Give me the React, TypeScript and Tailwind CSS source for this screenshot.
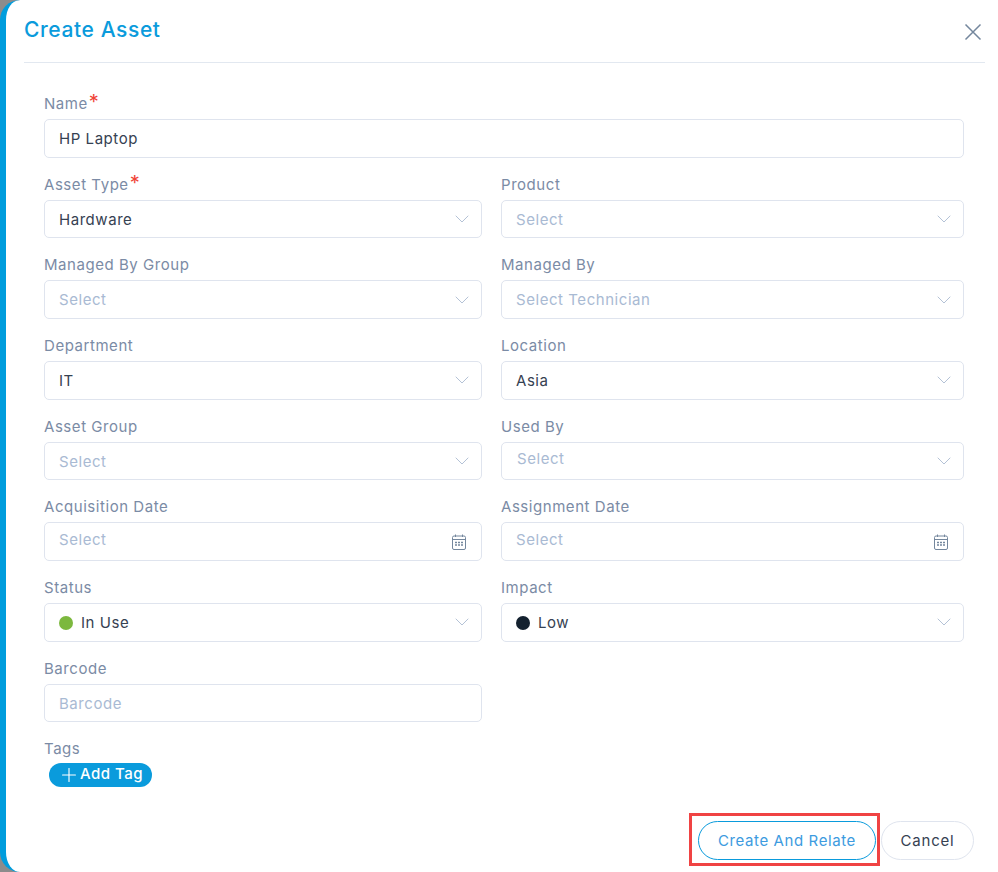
import { ChevronDown, Plus } from "lucide-react";

type FieldProps = {
    label: string;
    value?: string;
    placeholder?: string;
    required?: boolean;
    kind?: "select" | "date" | "input";
    dot?: string;
    textClass?: string;
};

function CalendarIcon() {
    return (
        <svg viewBox="0 0 14 16" className="w-[14px] h-[16px] text-[#74879d]" fill="none" stroke="currentColor" strokeWidth="1">
            <rect x="0.5" y="2" width="13" height="13.5" rx="1.5" />
            <path d="M0.5 5.5h13M3.5 0.5v2.5M10.5 0.5v2.5" />
            <path d="M3 8.5h2M6 8.5h2M9 8.5h2M3 11h2M6 11h2M9 11h2" strokeWidth="1.4" />
        </svg>
    );
}

function Field({ label, value, placeholder, required, kind = "select", dot, textClass }: FieldProps) {
    return (
        <div className="flex flex-col">
            <div className="h-[23px] text-[15px] leading-[23px] tracking-[0.55px] text-[#7b8ba5] whitespace-nowrap">
                {label}
                {required && <span className="ml-[1px] text-[#f04438] text-[20px] leading-[16px]">*</span>}
            </div>
            <div
                className={`h-[38.5px] mt-[4px] flex items-center justify-between pl-[14px] ${
                    kind === "date" ? "pr-[15px]" : "pr-[7px]"
                } bg-white border border-[#dfe4ee] rounded-[5px]`}
            >
                <div className={`flex items-center gap-[8px] pt-[2px] text-[15px] tracking-[0.55px] ${textClass ?? ""}`}>
                    {dot && <span className={`w-[14px] h-[14px] rounded-full ${dot}`}></span>}
                    {value ? (
                        <span className="text-[#364152]">{value}</span>
                    ) : (
                        <span className="text-[#a9bad3]">{placeholder}</span>
                    )}
                </div>
                {kind === "select" && <ChevronDown className="w-[24px] h-[24px] text-[#b4c2d6]" strokeWidth={1} />}
                {kind === "date" && <CalendarIcon />}
            </div>
        </div>
    );
}

export default function App() {
    return (
        <div className="w-[998px] h-[872px] bg-[#8c8c8c] overflow-hidden font-['Inter','Liberation_Sans',sans-serif]">
            <div className="h-full bg-white rounded-l-[20px] border-l-[6px] border-[#009ddd] flex flex-col pl-[18px] pr-[13px]">
                <div className="h-[63px] shrink-0 border-b border-[#e2e8f0] flex items-start justify-between">
                    <div className="mt-[15px] text-[21px] leading-[30px] tracking-[0.6px] font-medium text-[#0a9bdc]">Create Asset</div>
                    <svg viewBox="0 0 18 18" className="mt-[23px] mr-[3px] w-[18px] h-[18px] text-[#74879d]" fill="none" stroke="currentColor" strokeWidth="1.5">
                        <path d="M1.5 1.5l15 15M16.5 1.5l-15 15" />
                    </svg>
                </div>

                <div className="mt-[29px] pl-[20px] pr-[8px] grid grid-cols-[438px_463px] gap-x-[19px] gap-y-[15.2px]">
                    <div className="col-span-2">
                        <Field label="Name" value="HP Laptop" required kind="input" />
                    </div>
                    <Field label="Asset Type" value="Hardware" required />
                    <Field label="Product" placeholder="Select" />
                    <Field label="Managed By Group" placeholder="Select" />
                    <Field label="Managed By" placeholder="Select Technician" />
                    <Field label="Department" value="IT" />
                    <Field label="Location" value="Asia" />
                    <Field label="Asset Group" placeholder="Select" />
                    <Field label="Used By" placeholder="Select" textClass="-mt-[6px] ml-[1px]" />
                    <Field label="Acquisition Date" placeholder="Select" kind="date" textClass="-mt-[4px]" />
                    <Field label="Assignment Date" placeholder="Select" kind="date" textClass="-mt-[4px]" />
                    <Field label="Status" value="In Use" dot="bg-[#7cb83e]" />
                    <Field label="Impact" value="Low" dot="bg-[#14212f]" />
                    <Field label="Barcode" placeholder="Barcode" kind="input" />
                    <div></div>
                    <div className="col-span-2 -mt-[1px]">
                        <div className="h-[23px] text-[15px] leading-[23px] tracking-[0.55px] text-[#7b8ba5]">Tags</div>
                        <div className="mt-[3px] ml-[5px] inline-flex items-center h-[24px] pl-[9px] pr-[9px] rounded-full bg-[#0a9bdc] text-white text-[15px] tracking-[0.5px] font-medium">
                            <Plus className="w-[22px] h-[22px]" strokeWidth={1.25} />
                            Add Tag
                        </div>
                    </div>
                </div>

                <div className="mt-auto mb-[6px] mr-[11px] flex justify-end items-end gap-[1px]">
                    <div className="border-[3px] border-[#f04343] pt-[5px] pl-[6px] pr-[1px] pb-[3px]">
                        <div className="h-[39px] w-[178px] pt-[1px] flex items-center justify-center rounded-full border border-[#0a9bdc] text-[15px] tracking-[0.6px] text-[#3d9be0]">
                            Create And Relate
                        </div>
                    </div>
                    <div className="h-[39px] w-[93px] mb-[6px] pt-[1px] flex items-center justify-center rounded-full border border-[#dfe4ee] text-[15px] tracking-[0.8px] text-[#364152]">
                        Cancel
                    </div>
                </div>
            </div>
        </div>
    );
}
